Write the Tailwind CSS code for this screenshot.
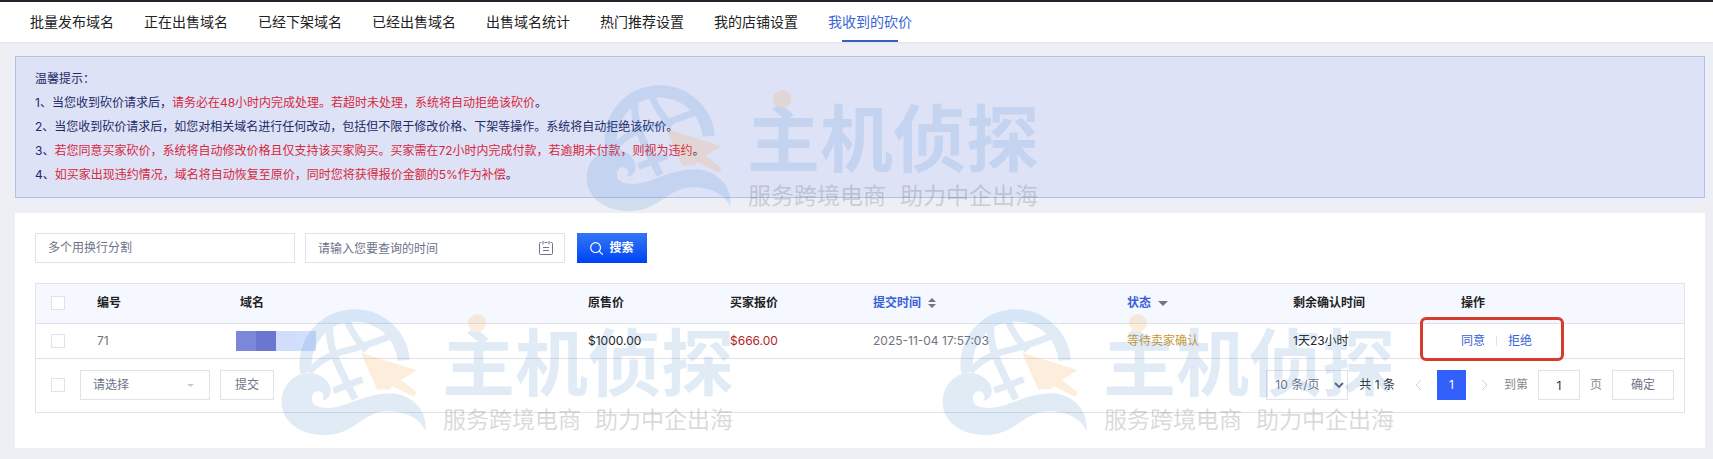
<!DOCTYPE html>
<html lang="zh-CN">
<head>
  <meta charset="UTF-8" />
  <meta name="viewport" content="width=device-width, initial-scale=1.0"/>
  <title>我收到的砍价</title>
  <script src="https://cdn.jsdelivr.net/npm/@tailwindcss/browser@4"></script>
  <style>
    body {
      font-family: Inter, 'Noto Sans CJK SC', sans-serif;
    }
  </style>
</head>
<body class="relative min-h-screen overflow-x-hidden bg-[#edeff5] text-xs text-[#222]">

  <!-- Tabs -->
  <nav class="flex h-[42px] gap-[30px] border-t-2 border-[#22242e] bg-white pl-[30px] text-sm leading-10 whitespace-nowrap shadow-xs">
    <a href="#">批量发布域名</a>
    <a href="#">正在出售域名</a>
    <a href="#">已经下架域名</a>
    <a href="#">已经出售域名</a>
    <a href="#">出售域名统计</a>
    <a href="#">热门推荐设置</a>
    <a href="#">我的店铺设置</a>
    <a href="#" class="relative text-[#3a66d6]">
      我收到的砍价
      <span class="absolute bottom-0 left-[14px] h-[2px] w-14 bg-[#3a5fc4]"></span>
    </a>
  </nav>

  <main class="pt-[14px] pr-2 pl-[15px]">

    <!-- Notice -->
    <section class="border border-[#b0c2ea] bg-[#dee2f6] px-[19px] py-[10px] leading-6 text-[#1c2a66]">
      <p>温馨提示：</p>
      <p>1、当您收到砍价请求后，<span class="text-[#d6283c]">请务必在48小时内完成处理。若超时未处理，系统将自动拒绝该砍价</span>。</p>
      <p>2、当您收到砍价请求后，如您对相关域名进行任何改动，包括但不限于修改价格、下架等操作。系统将自动拒绝该砍价。</p>
      <p>3、<span class="text-[#d6283c]">若您同意买家砍价，系统将自动修改价格且仅支持该买家购买。买家需在72小时内完成付款，若逾期未付款，则视为违约</span>。</p>
      <p>4、<span class="text-[#d6283c]">如买家出现违约情况，域名将自动恢复至原价，同时您将获得报价金额的5%作为补偿</span>。</p>
    </section>

    <section class="mt-[15px] bg-white px-5 pt-5 pb-[35px]">

      <!-- Search -->
      <form class="flex h-[30px]" onsubmit="return false">
        <input type="text" aria-label="域名" placeholder="多个用换行分割"
          class="w-[260px] border border-[#dfe2e8] px-3 placeholder:text-[#6d7389]" />
        <div class="relative ml-[10px] w-[260px]">
          <input type="text" aria-label="时间" placeholder="请输入您要查询的时间"
            class="h-full w-full border border-[#dfe2e8] pr-10 pl-3 placeholder:text-[#6d7389]" />
          <svg class="absolute top-2 right-3 size-[14px]" viewBox="0 0 14 14" fill="none" stroke="#6d7389">
            <path d="M2.500 1.500H1.500Q.5 1.500 .5 2.500V12.500Q.5 13.500 1.500 13.500H12.500Q13.500 13.500 13.500 12.500V2.500Q13.500 1.500 12.500 1.500H11.500M5.500 1.500H8.500M4 0v3.500M10 0v3.500M4 6.500h6M4 9.500h6"/>
          </svg>
        </div>
        <button class="ml-3 flex w-[70px] items-center justify-center gap-[6px] bg-linear-to-b from-[#3476f5] to-[#0040f5] font-bold text-white">
          <svg class="size-[13px]" viewBox="0 0 13 13" fill="none" stroke="currentColor" stroke-width="1.2" stroke-linecap="round">
            <circle cx="5.6" cy="5.6" r="4.9"/>
            <path d="M9.2 9.2l3.2 3.2"/>
          </svg>
          搜索
        </button>
      </form>

      <!-- List -->
      <div class="mt-5 border border-[#dfe2e8]">
        <table class="w-full table-fixed text-left">
          <thead>
            <tr class="h-[39px] border-b border-[#dfe2e8] bg-[#f5f9ff]">
              <th class="w-[49px] pl-[15px]"><input type="checkbox" aria-label="全选" class="block size-[14px] appearance-none border border-[#dfe2e8] bg-white" /></th>
              <th class="w-[143px] pl-3 font-bold">编号</th>
              <th class="pl-3 font-bold">域名</th>
              <th class="w-[142px] pl-3 font-bold">原售价</th>
              <th class="w-[143px] pl-3 font-bold">买家报价</th>
              <th class="w-[254px] pl-3 font-bold text-[#3a5fd9]">
                <a href="#" class="flex items-center gap-[7px]">提交时间
                  <svg class="h-[10px] w-2" viewBox="0 0 8 10" fill="#74777f"><path d="M4 0l4 4H0zM4 10l4-4H0z"/></svg>
                </a>
              </th>
              <th class="w-[166px] pl-3 font-bold text-[#3a5fd9]">
                <a href="#" class="flex items-center gap-[7px]">状态
                  <svg class="h-[5px] w-[10px]" viewBox="0 0 10 5" fill="#74777f"><path d="M0 0h10L5 5z"/></svg>
                </a>
              </th>
              <th class="w-[168px] pl-3 font-bold">剩余确认时间</th>
              <th class="w-[235px] pl-3 font-bold">操作</th>
            </tr>
          </thead>
          <tbody>
            <tr class="h-[35px] border-b border-[#dfe2e8]">
              <td class="pl-[15px]"><input type="checkbox" aria-label="选择 71" class="block size-[14px] appearance-none border border-[#dfe2e8] bg-white" /></td>
              <td class="pl-3 text-[#70737d]">71</td>
              <td class="pl-2">
                <div class="flex h-5">
                  <span class="w-5 bg-[#7b88da]"></span>
                  <span class="w-5 bg-[#6a76d0]"></span>
                  <span class="w-5 bg-[#d2dcfb]"></span>
                  <span class="w-5 bg-[#d0dffc]"></span>
                </div>
              </td>
              <td class="pl-3">$1000.00</td>
              <td class="pl-3 text-[#b01e28]">$666.00</td>
              <td class="pl-3 text-[#70737d]">2025-11-04 17:57:03</td>
              <td class="pl-3 text-[#c99a35]">等待卖家确认</td>
              <td class="pl-3">1天23小时</td>
              <td class="pl-3">
                <div class="relative flex items-center gap-[11px] text-[#3560d8]">
                  <a href="#">同意</a>
                  <span class="h-[10px] w-px bg-[#dfe2e8]"></span>
                  <a href="#">拒绝</a>
                  <span class="pointer-events-none absolute -top-4 -bottom-3 -left-[41px] w-36 rounded-md border-[3px] border-[#d63c2e]"></span>
                </div>
              </td>
            </tr>
          </tbody>
        </table>

        <!-- Batch actions and paging -->
        <div class="flex h-[53px] items-center pr-[10px] pl-[15px] text-[#6d7389]">
          <input type="checkbox" aria-label="全选本页" class="size-[14px] appearance-none border border-[#dfe2e8] bg-white" />
          <div class="relative ml-[15px] h-[30px] w-[130px]">
            <select aria-label="批量操作" class="h-full w-full appearance-none border border-[#dfe2e8] bg-white px-3">
              <option>请选择</option>
            </select>
            <svg class="pointer-events-none absolute top-[14px] right-4 h-[3px] w-[7px]" viewBox="0 0 7 3" fill="#c6cad3"><path d="M0 0h7L3.500 3z"/></svg>
          </div>
          <button class="ml-[10px] h-[30px] w-[54px] border border-[#dfe2e8]">提交</button>

          <div class="ml-auto flex h-[30px] items-center">
            <div class="relative h-full w-[82px]">
              <select aria-label="每页条数" class="h-full w-full appearance-none border border-[#dfe2e8] bg-white pl-2">
                <option>10 条/页</option>
              </select>
              <svg class="pointer-events-none absolute top-3 right-1 h-[6px] w-[10px]" viewBox="0 0 10 6" fill="none" stroke="#5a6074" stroke-width="1.8"><path d="M1 1l4 4 4-4"/></svg>
            </div>
            <span class="ml-[11px] text-[#333]">共 1 条</span>
            <button aria-label="上一页" class="ml-5">
              <svg class="h-3 w-[7px]" viewBox="0 0 7 12" fill="none" stroke="#ccd0d8"><path d="M6 1L1 6l5 5"/></svg>
            </button>
            <button class="ml-[15px] h-[30px] w-[29px] bg-[#3160fb] text-white">1</button>
            <button aria-label="下一页" class="ml-[15px]">
              <svg class="h-3 w-[7px]" viewBox="0 0 7 12" fill="none" stroke="#ccd0d8"><path d="M1 1l5 5-5 5"/></svg>
            </button>
            <label for="page" class="ml-4 text-[#85888f]">到第</label>
            <input id="page" type="text" value="1" class="ml-[10px] h-full w-[42px] border border-[#dfe2e8] text-center text-[#333]" />
            <span class="ml-[10px] text-[#85888f]">页</span>
            <button class="ml-[10px] h-full w-[62px] border border-[#dfe2e8]">确定</button>
          </div>
        </div>
      </div>
    </section>
  </main>

  <!-- Watermark -->
  <svg class="hidden">
    <symbol id="watermark" viewBox="0 0 480 140">
      <g transform="scale(.3333)" fill="none" stroke="#4388cd">
        <path d="M79 203A147 147 0 0 1 224 31A147 147 0 0 1 371 166" stroke-width="37"/>
        <path d="M88 200C118 166 150 150 182 141C240 128 290 110 345 88" stroke-width="20"/>
        <path d="M150 50C142 120 165 165 225 282" stroke-width="22"/>
        <path d="M200 45C218 90 236 112 260 136" stroke-width="20"/>
        <path d="M160 257L248 223" stroke-width="20"/>
        <path d="M5 292C5 242 42 204 84 204C130 204 156 238 152 262C149 280 138 288 126 286C136 274 128 259 113 259C98 260 92 276 98 292C106 310 140 312 170 306C220 294 270 265 330 265C400 266 444 322 436 378C418 334 360 314 306 320C240 330 220 390 130 390C60 390 5 350 5 292Z" fill="#4388cd" stroke="none"/>
        <path d="M243 143L410 196L362 225L410 262L401 275L338 243L328 253L292 254Z" fill="#f29531" stroke="none"/>
      </g>
      <text x="162" y="85" font-size="73" font-weight="700" fill="#4388cd">主机侦探</text>
      <circle cx="197" cy="18" r="9" fill="#f29531"/>
      <text x="163" y="123" font-size="23" fill="#222">服务跨境电商</text>
      <text x="315" y="123" font-size="23" fill="#222">助力中企出海</text>
    </symbol>
  </svg>
  <svg class="pointer-events-none absolute top-[81px] left-[585px] h-[140px] w-[480px] opacity-16"><use href="#watermark"/></svg>
  <svg class="pointer-events-none absolute top-[305px] left-[280px] h-[140px] w-[480px] opacity-16"><use href="#watermark"/></svg>
  <svg class="pointer-events-none absolute top-[305px] left-[941px] h-[140px] w-[480px] opacity-16"><use href="#watermark"/></svg>

</body>
</html>
